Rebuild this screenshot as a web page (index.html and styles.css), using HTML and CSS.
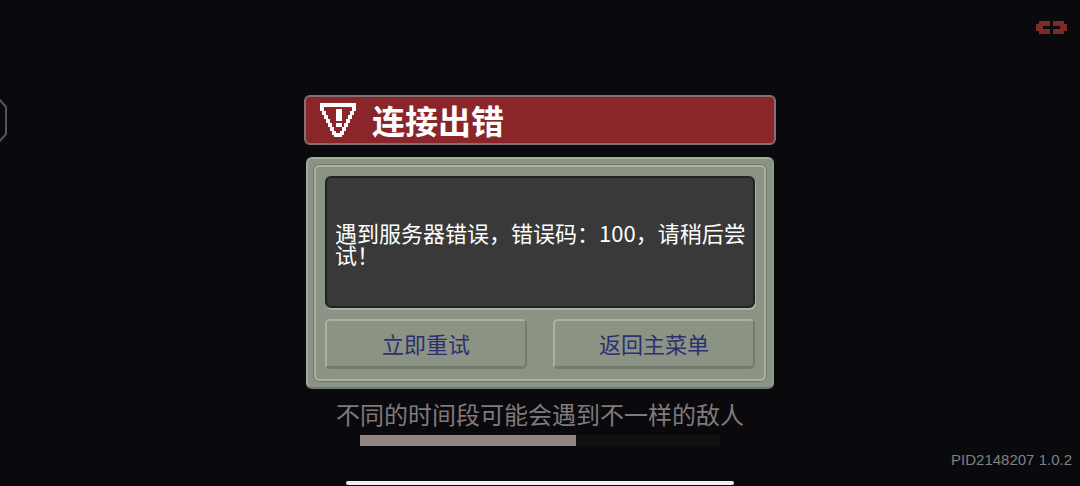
FILE: index.html
```
<!DOCTYPE html>
<html lang="zh-CN">
<head>
  <meta charset="UTF-8">
  <meta name="viewport" content="width=device-width, initial-scale=1">
  <title>连接出错</title>
  <link rel="stylesheet" href="styles.css">
</head>
<body>

<main class="dialog">
  <!-- Title bar -->
  <header class="title-bar">
    <svg class="warning" viewBox="0 0 18 17" shape-rendering="crispEdges" aria-hidden="true">
      <path fill="#fff" fill-rule="evenodd" d="M0 0h18v4h-1v2h-1v2h-1v2h-1v2h-1v2h-1v2h-1v1H7v-1H6v-2H5v-2H4v-2H3V8H2V6H1V4H0zM2 2v2h1v2h1v2h1v2h1v2h1v2h1v1h2v-1h1v-2h1v-2h1V8h1V6h1V4h1V2z"/>
      <path fill="#fff" d="M8 3h3v6H8zM8 10h3v2H8z"/>
    </svg>
    <h1>连接出错</h1>
  </header>

  <!-- Message panel -->
  <section class="panel">
    <div class="panel-inner">
      <div class="message">
        <p>遇到服务器错误，错误码：100，请稍后尝试！</p>
      </div>
      <div class="actions">
        <button class="button" type="button">立即重试</button>
        <button class="button" type="button">返回主菜单</button>
      </div>
    </div>
  </section>

  <!-- Loading tip -->
  <p class="tip" id="tip">不同的时间段可能会遇到不一样的敌人</p>
  <div class="progress" role="progressbar" aria-labelledby="tip" aria-valuenow="60" aria-valuemin="0" aria-valuemax="100">
    <div class="progress-fill" style="width: 60%"></div>
  </div>
</main>

<svg class="side-tab" viewBox="0 0 8 46" aria-hidden="true">
  <path d="M-2 0L6 9V36L-2 45" fill="none" stroke="#55555a" stroke-width="2"/>
</svg>

<svg class="link-icon" viewBox="0 0 31 13" shape-rendering="crispEdges" aria-hidden="true">
  <path fill="#7c2b26" d="M3 0h11v5H7v3h7v5H3v-3H0V3h3zM17 0h11v3h3v7h-3v3H17V8h7V5h-7z"/>
</svg>

<footer class="version">PID2148207 1.0.2</footer>
<div class="home-bar"></div>

</body>
</html>
```

FILE: styles.css
```
* {
  box-sizing: border-box;
}

body {
  position: relative;
  min-height: 100vh;
  margin: 0;
  padding: 95px 16px 40px;
  background: #0a0a0e;
  color: #fff;
  font-family: "Noto Sans CJK SC", sans-serif;
  overflow: hidden;
}

.dialog {
  display: flex;
  flex-direction: column;
  align-items: center;
  max-width: 472px;
  margin: 0 auto;
}

.title-bar {
  display: flex;
  align-items: center;
  gap: 16px;
  width: 100%;
  padding: 0 14px;
  background: #8a262a;
  border: 2px solid #827174;
  border-radius: 6px;
}

.warning {
  width: 36px;
  height: 34px;
}

h1 {
  margin: 0;
  font-size: 33px;
  line-height: 46px;
  font-weight: bold;
}

.panel {
  align-self: stretch;
  margin: 12px 2px 0;
  padding: 6px;
  background: #8b9384;
  border: 2px solid #a3ac99;
  border-right-color: #939b8b;
  border-bottom-color: #727a6c;
  border-radius: 6px;
}

.panel-inner {
  padding: 9px;
  border: 2px solid #a9b29f;
  border-radius: 5px;
  box-shadow: 0 0 0 1px #70786a;
}

.message {
  display: flex;
  align-items: center;
  min-height: 132px;
  padding: 2px 4px 0 8px;
  background: #393939;
  border: 2px solid #20231f;
  border-radius: 6px;
  box-shadow: 1px 2px 0 #a9b29f;
  font-size: 22px;
  line-height: 22px;
}

.message p {
  margin: 0;
}

.actions {
  display: flex;
  gap: 26px;
  margin-top: 11px;
  margin-bottom: 1px;
}

.button {
  flex: 1;
  height: 50px;
  padding: 0 0 2px;
  background: #8b9384;
  color: #2c2f70;
  border: 2px solid #a9b29f;
  border-right-color: #737b6d;
  border-bottom: 3px solid #737b6d;
  border-radius: 5px;
  font-family: inherit;
  font-size: 22px;
  cursor: pointer;
}

.button:active {
  border-color: #737b6d;
}

.tip {
  margin: 9px 0 0;
  color: #81797a;
  font-size: 24px;
  line-height: 32px;
  text-align: center;
}

.progress {
  width: 360px;
  max-width: 100%;
  height: 11px;
  margin-top: 5px;
  background: #101010;
}

.progress-fill {
  height: 100%;
  background: #90867f;
}

/* Overlays at the screen edges */
.side-tab {
  position: absolute;
  top: 98px;
  left: 0;
  width: 8px;
  height: 46px;
}

.link-icon {
  position: absolute;
  top: 21px;
  right: 13px;
  width: 31px;
  height: 13px;
}

.version {
  position: absolute;
  right: 8px;
  bottom: 16px;
  color: #808083;
  font-family: "Liberation Sans", Arial, sans-serif;
  font-size: 15px;
  line-height: 20px;
}

.home-bar {
  position: absolute;
  bottom: 1px;
  left: 32%;
  right: 32%;
  height: 4px;
  background: #eee;
  border-radius: 2px;
}
```
